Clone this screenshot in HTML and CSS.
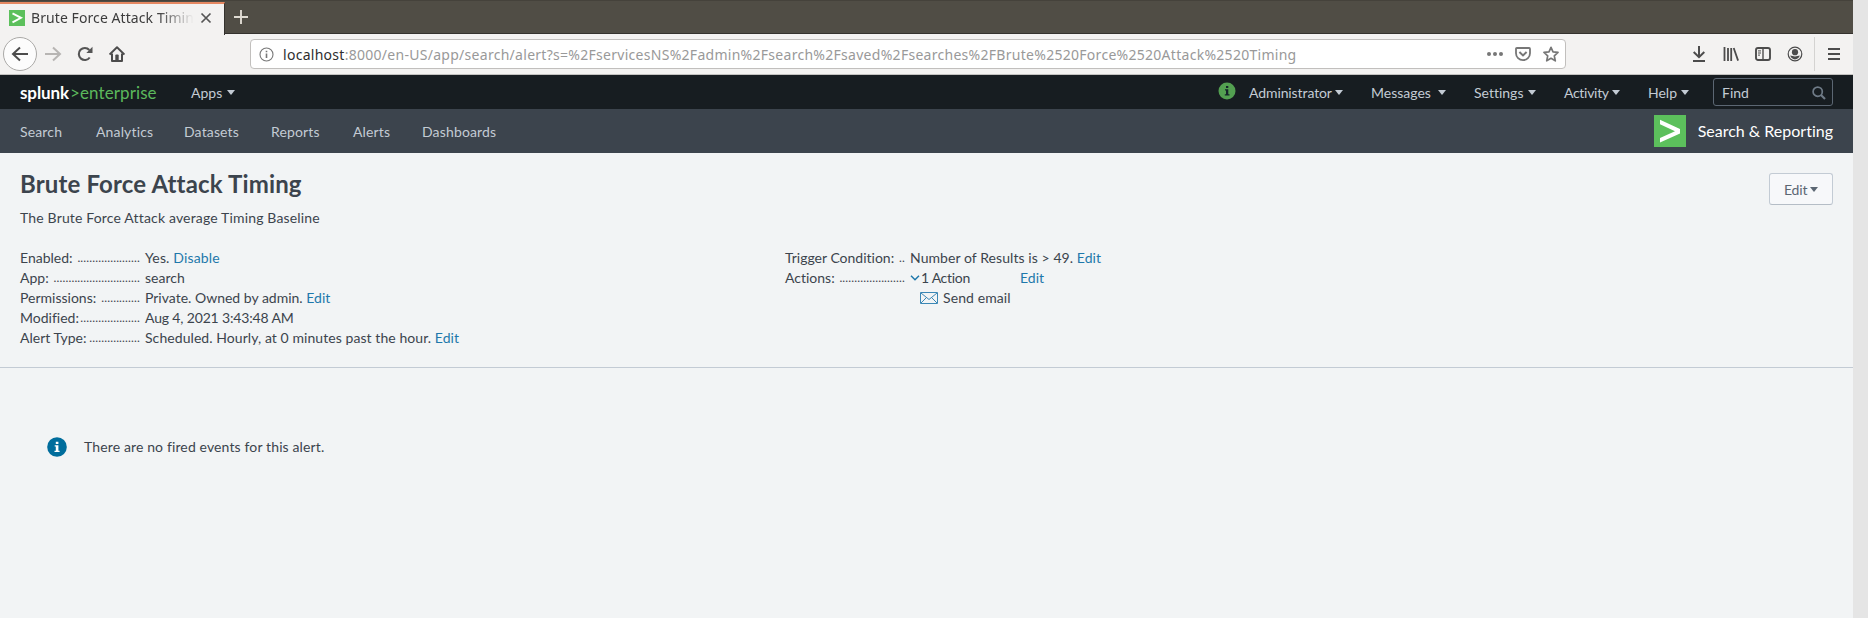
FILE: index.html
```html
<!DOCTYPE html>
<html lang="en">
<head>
<meta charset="utf-8">
<title>Brute Force Attack Timing</title>
<link rel="stylesheet" href="styles.css">
</head>
<body>
<div class="window">
  <div class="tabs">
    <div class="tab">
      <svg class="favicon" viewBox="0 0 16 16"><rect width="16" height="16" fill="#5cc05c"/><path d="M3.5 3.4 L12 7.8 L3.5 12.4" fill="none" stroke="#fff" stroke-width="1.9"/></svg>
      <span class="tab-title">Brute Force Attack Timing</span>
      <svg class="tab-close" viewBox="0 0 12 12"><path d="M1.5 1.5 L10.5 10.5 M10.5 1.5 L1.5 10.5" stroke="#555" stroke-width="1.7"/></svg>
    </div>
    <svg class="new-tab" viewBox="0 0 14 14"><path d="M7 0V14M0 7H14" stroke="#dfdbd2" stroke-width="1.9"/></svg>
  </div>
  <div class="toolbar">
    <div class="back"><svg width="18" height="16" viewBox="0 0 18 16"><path d="M17 8H2M9 1.5L2 8l7 6.5" fill="none" stroke="#4c4c4c" stroke-width="2"/></svg></div>
    <svg class="forward" width="18" height="16" viewBox="0 0 18 16"><path d="M1 8h15M9 1.5L16 8l-7 6.5" fill="none" stroke="#b7b5b3" stroke-width="2"/></svg>
    <svg class="reload" width="16" height="16" viewBox="0 0 16 16"><path d="M12.7 11.5A6 6 0 1 1 12.3 4" fill="none" stroke="#555" stroke-width="2.1"/><path d="M15.5.8V7H9.3z" fill="#555"/></svg>
    <svg class="home" width="16" height="16" viewBox="0 0 16 16"><path d="M.6 8.6L8 1.3l7.400 7.300" fill="none" stroke="#4c4c4c" stroke-width="1.9" stroke-linejoin="round"/><path d="M3 7.5v7.400h10V7.500" fill="none" stroke="#4c4c4c" stroke-width="2" stroke-linejoin="round"/><path d="M6.300 15V9.500q0-1 1-1h1.400q1 0 1 1V15z" fill="#4c4c4c"/></svg>
    <div class="urlbar">
      <svg width="15" height="15" viewBox="0 0 15 15"><circle cx="7.5" cy="7.5" r="6.5" fill="none" stroke="#777" stroke-width="1.1"/><path d="M7.5 6.5V11M7.5 3.8V5.3" stroke="#777" stroke-width="1.6"/></svg>
      <span class="url"><b class="host">localhost</b>:8000/en-US/app/search/alert?s=%2FservicesNS%2Fadmin%2Fsearch%2Fsaved%2Fsearches%2FBrute%2520Force%2520Attack%2520Timing</span>
      <span class="url-actions">
        <svg width="16" height="16" viewBox="0 0 16 16"><circle cx="2" cy="8" r="2" fill="#777"/><circle cx="8" cy="8" r="2" fill="#777"/><circle cx="14" cy="8" r="2" fill="#777"/></svg>
        <svg width="16" height="16" viewBox="0 0 16 16"><path d="M1.9 2h12.2q.9 0 .9.9v4.3a7 7 0 0 1-14 0V2.9Q1 2 1.9 2z" fill="none" stroke="#777" stroke-width="1.8"/><path d="M4.4 6L8 9.4 11.6 6" fill="none" stroke="#777" stroke-width="2"/></svg>
        <svg width="16" height="16" viewBox="0 0 16 16"><path d="M8 1.3l2 4.6 5 .5-3.7 3.4 1 5L8 12.3l-4.3 2.5 1-5L1 6.4l5-.5z" fill="none" stroke="#777" stroke-width="1.7" stroke-linejoin="round"/></svg>
      </span>
    </div>
    <div class="tools">
      <svg width="16" height="16" viewBox="0 0 16 16"><path d="M8 0v11M2.7 6L8 11.2 13.3 6M2 15h12" fill="none" stroke="#4c4c4c" stroke-width="2"/></svg>
      <svg width="16" height="16" viewBox="0 0 16 16"><path d="M1.5 1v14M5 2v13M8.2 2v13" stroke="#4c4c4c" stroke-width="1.8"/><path d="M10.7 2l4.4 12.6" stroke="#4c4c4c" stroke-width="1.8"/></svg>
      <svg width="16" height="16" viewBox="0 0 16 16"><rect x="1" y="2" width="14" height="12" rx="2" fill="none" stroke="#4c4c4c" stroke-width="1.9"/><path d="M8 2v12" stroke="#4c4c4c" stroke-width="1.4"/><path d="M3 4.9h3M3 7h3M3 9.1h2" stroke="#4c4c4c" stroke-width="1"/></svg>
      <svg width="16" height="16" viewBox="0 0 16 16"><circle cx="8" cy="8" r="6.8" fill="none" stroke="#4c4c4c" stroke-width="1.2"/><circle cx="8" cy="6.2" r="3.1" fill="#4c4c4c"/><path d="M3.2 9.6Q8 11.2 12.8 9.6 11.5 13.4 8 13.4T3.2 9.6z" fill="#4c4c4c"/></svg>
    </div>
    <div class="menu-button"><svg width="12" height="12" viewBox="0 0 12 12"><path d="M0 1h12M0 6h12M0 11h12" stroke="#4c4c4c" stroke-width="1.8"/></svg></div>
  </div>

  <header class="topbar">
    <div class="logo"><span class="brand">splunk</span><span class="gt">&gt;</span><span class="product">enterprise</span></div>
    <div class="menu apps">Apps<i class="caret"></i></div>
    <div class="account">
      <svg class="health" viewBox="0 0 18 18"><circle cx="9" cy="9" r="8.5" fill="#53a051"/><path d="M8 4h2.3v2H8zM7 7.2h3.3v5H11.500v1.200H6.800v-1.200H8V8.400H7z" fill="#15252a"/></svg>
      <div class="menus">
        <div class="menu administrator">Administrator<i class="caret"></i></div>
        <div class="menu messages">Messages<i class="caret"></i></div>
        <div class="menu settings">Settings<i class="caret"></i></div>
        <div class="menu activity">Activity<i class="caret"></i></div>
        <div class="menu help">Help<i class="caret"></i></div>
      </div>
      <div class="find">Find<svg width="14" height="14" viewBox="0 0 14 14"><circle cx="5.700" cy="5.700" r="4.600" fill="none" stroke="#6f7b87" stroke-width="1.700"/><path d="M9 9l4 4" stroke="#6f7b87" stroke-width="2.200"/></svg></div>
    </div>
  </header>

  <nav class="nav">
    <div class="links"><span>Search</span><span>Analytics</span><span>Datasets</span><span>Reports</span><span>Alerts</span><span>Dashboards</span></div>
    <div class="app"><svg width="32" height="32" viewBox="0 0 32 32"><rect width="32" height="32" fill="#5cc05c"/><path d="M6 4.800L26 14v4.400L6 27.400v-4.300L21 16.200 6 9.200z" fill="#fff"/></svg><span class="app-name">Search &amp; Reporting</span></div>
  </nav>

  <main>
    <section class="details">
      <div class="heading"><h1>Brute Force Attack Timing</h1><button class="edit">Edit<i class="caret"></i></button></div>
      <p class="description">The Brute Force Attack average Timing Baseline</p>
      <div class="columns">
        <dl>
          <dt><span>Enabled:</span><i class="dots">.....................</i></dt><dd class="enabled">Yes. <a>Disable</a></dd>
          <dt><span>App:</span><i class="dots">.............................</i></dt><dd>search</dd>
          <dt><span>Permissions:</span><i class="dots">.............</i></dt><dd>Private. Owned by admin. <a>Edit</a></dd>
          <dt><span>Modified:</span><i class="dots">....................</i></dt><dd class="date">Aug 4, 2021 3:43:48 AM</dd>
          <dt><span>Alert Type:</span><i class="dots">.................</i></dt><dd class="schedule">Scheduled. Hourly, at 0 minutes past the hour. <a>Edit</a></dd>
        </dl>
        <dl class="trigger">
          <dt><span>Trigger Condition:</span><i class="dots">..</i></dt><dd class="schedule">Number of Results is &gt; 49. <a>Edit</a></dd>
          <dt><span>Actions:</span><i class="dots">......................</i></dt>
          <dd class="action"><svg width="10" height="6" viewBox="0 0 10 6"><path d="M1 .8L5 4.800 9 .8" fill="none" stroke="#1e78ab" stroke-width="1.500"/></svg><span class="count">1 Action</span><a>Edit</a></dd>
          <dd class="email"><svg width="18" height="12" viewBox="0 0 18 12"><path d="M.5.5h17v11H.5zM1 1l8 6.500L17 1M1 11l5.500-5.500M17 11l-5.500-5.500" fill="none" stroke="#3b87b5" stroke-width="1"/></svg>Send email</dd>
        </dl>
      </div>
    </section>
    <div class="notice"><svg width="20" height="20" viewBox="0 0 20 20"><circle cx="10" cy="10" r="9.800" fill="#006d9c"/><path d="M8.800 4.800h2.600v2.200H8.800zM7.700 8.300h3.700v5.400h1.200V15H7.500v-1.300h1.300V9.600H7.700z" fill="#fff"/></svg><span>There are no fired events for this alert.</span></div>
  </main>
</div>
</body>
</html>
```
FILE: styles.css
```css
* { box-sizing: border-box; }
body { margin: 0; background: #e5e5e5; font-family: Lato, sans-serif; font-size: 14px; line-height: 20px; color: #3c444d; font-variant-ligatures: none; }
svg { display: block; flex: none; }
i { font-style: normal; }
.window { width: 1853px; height: 618px; background: #f2f4f5; overflow: hidden; }

.tabs { display: flex; height: 34px; background: #504d45; border-top: 1px solid #45423b; border-bottom: 1px solid #34322e; }
.tab { display: flex; align-items: center; width: 225px; height: 33px; padding: 0 12px 3px 9px; background: #f3f2f1; border-top: 2px solid #e58862; border-right: 1px solid #34322e; margin-top: 1px; }
.favicon { width: 16px; height: 16px; }
.tab-title { width: 166px; margin: 0 5px 0 6px; overflow: hidden; white-space: nowrap; font: 14px/20px "Noto Sans", sans-serif; letter-spacing: .08px; color: #3c3c3c; -webkit-mask-image: linear-gradient(90deg, #000 78%, transparent 100%); mask-image: linear-gradient(90deg, #000 78%, transparent 100%); }
.tab-close { width: 12px; height: 12px; margin-left: 1px; }
.new-tab { width: 14px; height: 14px; margin: 9px 0 0 9px; }

.toolbar { display: flex; align-items: center; height: 41px; padding: 0 13px 0 3px; background: #f3f2f1; border-bottom: 1px solid #c3c2c0; }
.back { display: flex; align-items: center; justify-content: center; width: 34px; height: 34px; border: 1px solid #aaa9a7; border-radius: 50%; background: #fcfcfc; }
.forward { margin-left: 7px; }
.reload { margin-left: 15px; }
.home { margin-left: 16px; }
.urlbar { display: flex; align-items: center; width: 1316px; height: 30px; margin-left: 125px; padding: 0 6px 0 8px; background: #fff; border: 1px solid #c1bfbd; border-radius: 4px; }
.url { margin-left: 9px; padding-top: 1px; font: 14px/20px "Noto Sans", sans-serif; letter-spacing: .28px; white-space: nowrap; color: #999; }
.host { font-weight: 400; color: #2e2e2e; }
.url-actions { display: flex; gap: 12px; margin-left: auto; }
.tools { display: flex; gap: 16px; margin-left: 125px; }
.menu-button { display: flex; align-items: center; height: 34px; margin-left: auto; padding-left: 13px; border-left: 1px solid #d4d3d1; }

.topbar { display: flex; align-items: center; height: 34px; padding: 0 20px; background: #171d21; color: #c3cbd4; }
.logo { display: flex; width: 171px; padding-top: 1px; font-size: 17px; color: #5cb85c; }
.brand { width: 50px; font-weight: 700; letter-spacing: -.1px; color: #fff; }
.gt { width: 10px; }
.product { letter-spacing: .1px; }
.menu { display: flex; align-items: center; justify-content: space-between; padding-top: 1px; }
.caret { width: 0; height: 0; border: 4px solid transparent; border-top: 5px solid currentColor; border-bottom: 0; }
.apps { width: 44px; }
.account { display: flex; align-items: center; margin-left: auto; }
.health { width: 18px; height: 18px; margin: -3px 13px 0 0; }
.menus { display: flex; gap: 28px; margin-right: 24px; }
.administrator { width: 94px; letter-spacing: -.1px; }
.messages { width: 75px; }
.settings { width: 62px; }
.activity { width: 56px; letter-spacing: -.3px; }
.help { width: 41px; }
.find { display: flex; align-items: center; justify-content: space-between; width: 120px; height: 28px; padding: 1px 6px 0 8px; border: 1px solid #5c6773; border-radius: 3px; }

.nav { display: flex; align-items: center; justify-content: space-between; height: 44px; padding: 0 20px; background: #3c444d; color: #c3cbd4; }
.links { display: grid; grid-template-columns: 76px 88px 87px 82px 69px auto; padding-top: 1px; letter-spacing: .15px; }
.app { display: flex; align-items: center; gap: 12px; color: #fff; }
.app-name { font-size: 16px; letter-spacing: 0; }

.details { height: 215px; padding: 20px 20px 0; border-bottom: 1px solid #c3cbd4; }
.heading { display: flex; justify-content: space-between; height: 35px; }
h1 { margin: -1px 0 0; font-size: 24px; line-height: 24px; font-weight: 700; letter-spacing: .15px; }
.edit { display: flex; align-items: center; justify-content: space-between; width: 64px; height: 32px; padding: 1px 14px 0; border: 1px solid #c3cbd4; border-bottom-color: #b5bdc6; border-radius: 3px; background: #f7f8fa; font: 14px/20px Lato, sans-serif; letter-spacing: -.2px; color: #5c6773; }
.description { margin: 0; height: 40px; letter-spacing: .16px; }
.columns { display: grid; grid-template-columns: 765px 1fr; }
dl { display: grid; grid-template-columns: 120px auto; grid-auto-rows: 20px; justify-content: start; margin: 0; column-gap: 5px; white-space: nowrap; }
dt { display: flex; justify-content: space-between; }
.dots { font-size: 12px; letter-spacing: .15px; }
dd { margin: 0; }
.enabled { letter-spacing: .15px; }
.date { letter-spacing: -.16px; }
.schedule { letter-spacing: .07px; }
a { color: #1e78ab; }
.action { display: flex; align-items: center; }
.count { width: 100px; padding-left: 1px; letter-spacing: -.3px; }
.email { display: flex; align-items: center; grid-column: 2; gap: 5px; padding-left: 10px; letter-spacing: .1px; }
.notice { display: flex; align-items: center; gap: 17px; margin: 68px 0 0 47px; letter-spacing: .13px; }
.notice span { padding-top: 1px; }
```
